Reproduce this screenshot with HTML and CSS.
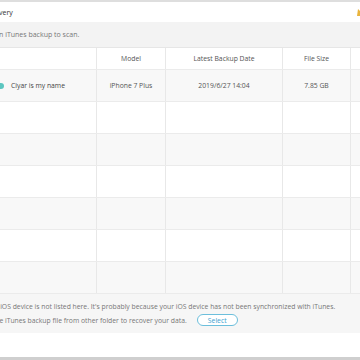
FILE: index.html
```html
<!DOCTYPE html>
<html>
<head>
    <title>Data Recovery</title>
    <link rel="stylesheet" href="styles.css">
</head>
<body>
<div id="frame">
    <div id="titlebar">
        <span class="title">Data Recovery</span>
        <svg class="badge" width="14" height="10" viewBox="0 0 14 10">
            <path d="M1 9 L2 2 L5 5 L7 1 L9 5 L12 2 L13 9 Z" fill="#e9b43c"/>
        </svg>
    </div>
    <div id="hint">Select an iTunes backup to scan.</div>

    <div id="table">
        <div class="row head">
            <div class="cell first"></div>
            <div class="cell">Model</div>
            <div class="cell">Latest Backup Date</div>
            <div class="cell">File Size</div>
            <div class="cell last"></div>
        </div>
        <div class="row odd">
            <div class="cell first">
                <span class="check"></span>
                <span class="dev-icon"></span>
                <span class="name">Ciyar is my name</span>
            </div>
            <div class="cell">iPhone 7 Plus</div>
            <div class="cell">2019/6/27 14:04</div>
            <div class="cell">7.85 GB</div>
            <div class="cell last"></div>
        </div>
        <div class="row"><div class="cell first"></div><div class="cell"></div><div class="cell"></div><div class="cell"></div><div class="cell last"></div></div>
        <div class="row odd"><div class="cell first"></div><div class="cell"></div><div class="cell"></div><div class="cell"></div><div class="cell last"></div></div>
        <div class="row"><div class="cell first"></div><div class="cell"></div><div class="cell"></div><div class="cell"></div><div class="cell last"></div></div>
        <div class="row odd"><div class="cell first"></div><div class="cell"></div><div class="cell"></div><div class="cell"></div><div class="cell last"></div></div>
        <div class="row"><div class="cell first"></div><div class="cell"></div><div class="cell"></div><div class="cell"></div><div class="cell last"></div></div>
        <div class="row odd"><div class="cell first"></div><div class="cell"></div><div class="cell"></div><div class="cell"></div><div class="cell last"></div></div>
    </div>

    <div id="footer">
        <div class="line">If your iOS device is not listed here. It's probably because your iOS device has not been synchronized with iTunes.</div>
        <div class="line second">Or use the iTunes backup file from other folder to recover your data. <button id="select">Select</button></div>
    </div>
</div>
</body>
</html>
```

FILE: styles.css
```css
* {
    padding: 0;
    margin: 0;
    box-sizing: border-box;
}

body {
    width: 360px;
    height: 360px;
    overflow: hidden;
    background-color: #ffffff;
    font-family: "Open Sans", Arial, sans-serif;
    font-size: 6.8px;
    color: #666666;
}

#frame {
    width: 400px;
    height: 360px;
    margin-left: -40px;
    border-top: 2px solid #dedede;
    border-bottom: 3px solid #cfcfcf;
    display: flex;
    flex-direction: column;
}

#titlebar {
    height: 20px;
    display: flex;
    align-items: center;
    justify-content: space-between;
    padding-left: 6px;
    color: #333333;
    font-size: 7px;
}

.badge {
    margin-right: -10px;
}

#hint {
    height: 25px;
    display: flex;
    align-items: center;
    padding-left: 14px;
    background-color: #f3f3f3;
    color: #777777;
    font-size: 7px;
}

#table {
    border-top: 1px solid #e6e6e6;
}

.row {
    display: grid;
    grid-template-columns: 137px 69px 117px 68px 1fr;
    height: 32px;
    border-bottom: 1px solid #ebebeb;
}

.row.head {
    height: 22px;
    background-color: #ffffff;
    color: #555555;
}

.row.odd {
    background-color: #f8f8f8;
}

.cell {
    display: flex;
    align-items: center;
    justify-content: center;
    border-right: 1px solid #e8e8e8;
    color: #555555;
}

.cell.first {
    justify-content: flex-start;
    padding-left: 20px;
}

.cell.last {
    border-right: none;
}

.check {
    flex-shrink: 0;
    width: 8px;
    height: 8px;
    border: 1px solid #cccccc;
    border-radius: 1px;
    background: #ffffff;
}

.dev-icon {
    flex-shrink: 0;
    width: 6px;
    height: 6px;
    margin-left: 10px;
    border-radius: 50%;
    background-color: #5cc6c0;
}

.name {
    margin-left: 7px;
    color: #444444;
}

#footer {
    background-color: #f6f6f6;
    padding: 5px 0 6px 18px;
    color: #777777;
}

.line {
    height: 14px;
    display: flex;
    align-items: center;
    white-space: nowrap;
}

.line.second {
    margin-left: -8px;
}

#select {
    margin-left: 10px;
    width: 41px;
    height: 12px;
    border: 1px solid #6cbfdc;
    border-radius: 7px;
    background-color: #ffffff;
    color: #3d9fd0;
    font-family: "Open Sans", Arial, sans-serif;
    font-size: 6.8px;
}
```
